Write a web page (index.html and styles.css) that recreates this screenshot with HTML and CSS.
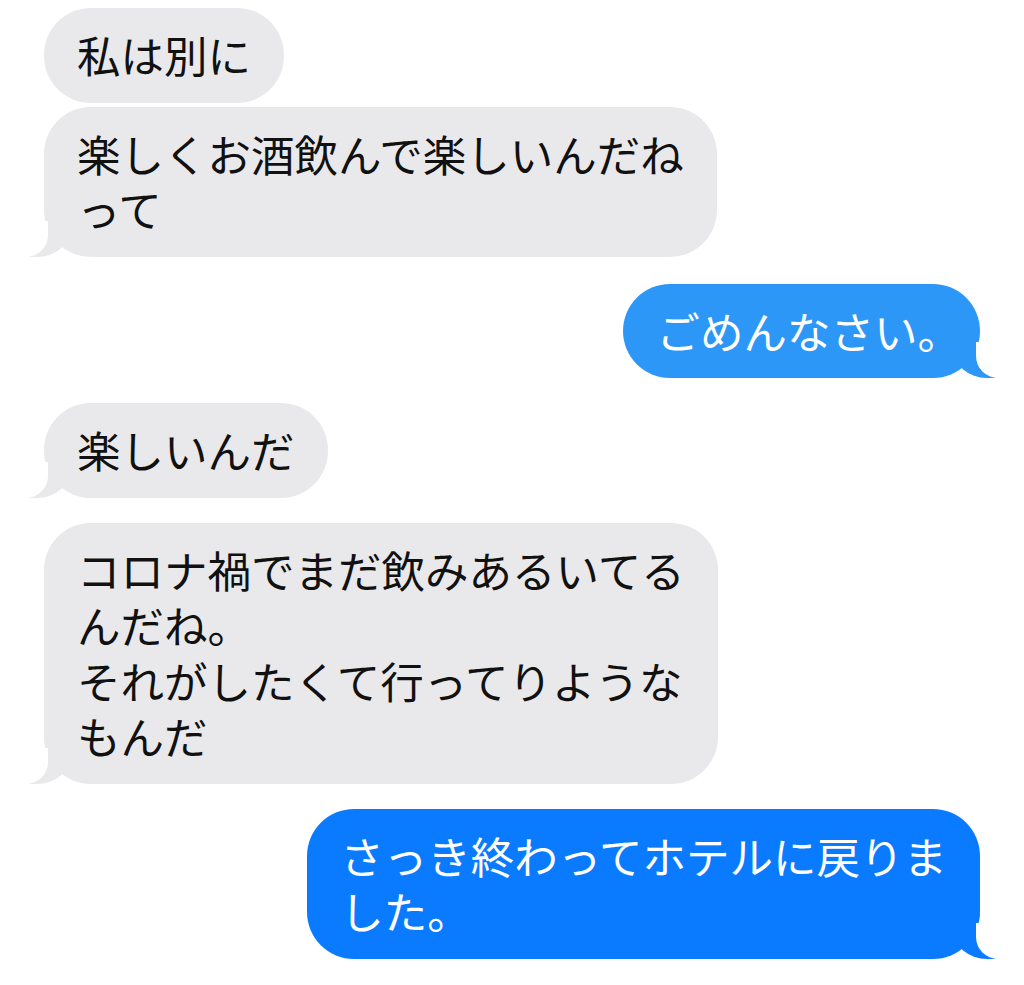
FILE: index.html
```html
<!DOCTYPE html>
<html lang="ja">
<head>
  <meta charset="UTF-8" />
  <meta name="viewport" content="width=device-width, initial-scale=1.0"/>
  <title>メッセージ</title>
  <link rel="stylesheet" href="styles.css">
</head>
<body>

<main class="thread">
  <div class="group them">
    <div class="bubble">私は別に</div>
    <div class="bubble tail">楽しくお酒飲んで楽しいんだね<br>って</div>
  </div>

  <div class="group me first-me">
    <div class="bubble tail light end-punct">ごめんなさい。</div>
  </div>

  <div class="group them">
    <div class="bubble tail">楽しいんだ</div>
  </div>

  <div class="group them">
    <div class="bubble tail">コロナ禍でまだ飲みあるいてる<br>んだね。<br>それがしたくて行ってりような<br>もんだ</div>
  </div>

  <div class="group me">
    <div class="bubble tail">さっき終わってホテルに戻りま<br>した。</div>
  </div>
</main>

</body>
</html>
```

FILE: styles.css
```css
* { box-sizing: border-box; }
body {
  margin: 0;
  background: #fff;
  font-family: 'Noto Sans CJK JP', 'Noto Sans', sans-serif;
  color: #111;
}

.thread {
  display: flex;
  flex-direction: column;
  gap: 25px;
  padding: 8px 44px;
}

.group {
  display: flex;
  flex-direction: column;
  gap: 4px;
}
.group.them { align-items: flex-start; }
.group.me { align-items: flex-end; }
.first-me { margin-top: 2px; }

.bubble {
  position: relative;
  padding: 19px 33px 20px;
  border-radius: 47px;
  font-size: 43.5px;
  line-height: 55.5px;
  white-space: nowrap;
}
.them .bubble {
  background: #e9e9eb;
  color: #111;
}
.me .bubble {
  background: #0a7bfe;
  color: #fff;
}
.me .bubble.light { background: #2d97f8; }
.bubble.end-punct { padding-left: 34px; padding-right: 19px; }

/* tails */
.bubble.tail::before,
.bubble.tail::after {
  content: "";
  position: absolute;
  bottom: 0;
  height: 36px;
}
.them .bubble.tail::before {
  left: -15px;
  width: 42px;
  background: #e9e9eb;
  border-bottom-right-radius: 34px 30px;
}
.them .bubble.tail::after {
  left: -48px;
  width: 52px;
  background: #fff;
  border-bottom-right-radius: 22px;
}
.me .bubble.tail::before {
  right: -15px;
  width: 42px;
  background: inherit;
  border-bottom-left-radius: 34px 30px;
}
.me .bubble.tail::after {
  right: -48px;
  width: 52px;
  background: #fff;
  border-bottom-left-radius: 22px;
}
```
